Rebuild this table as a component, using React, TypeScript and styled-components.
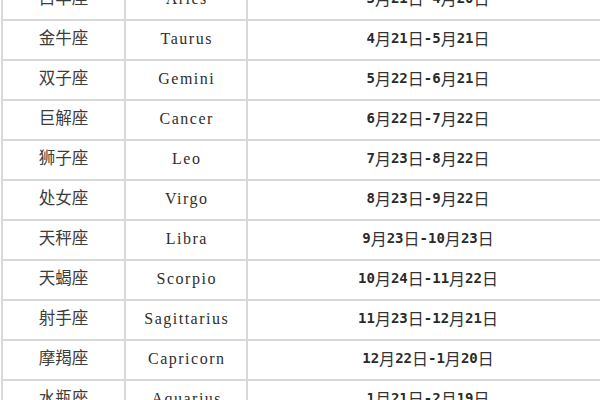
import React from "react";
import styled, { createGlobalStyle } from "styled-components";

const Global = createGlobalStyle`
  html, body {
    margin: 0;
    padding: 0;
    background: #ffffff;
    overflow: hidden;
    width: 600px;
    height: 400px;
  }
`;

const Page = styled.div`
  width: 600px;
  height: 400px;
  overflow: hidden;
  background: #ffffff;
`;

const Table = styled.div`
  display: flex;
  flex-direction: column;
  width: 607px;
  margin: -19px 0 0 1px;
  border-left: 2px solid #d8d8d8;
  box-sizing: border-box;
`;

const Row = styled.div`
  display: grid;
  grid-template-columns: 123px 122px 360px;
  height: 40px;
  box-sizing: border-box;
  border-bottom: 2px solid #d8d8d8;
`;

const Cell = styled.div<{ $last?: boolean; $kind: "zh" | "en" | "date" }>`
  display: flex;
  justify-content: center;
  align-items: flex-start;
  box-sizing: border-box;
  padding-top: ${(p) => (p.$kind === "en" ? "8px" : p.$kind === "zh" ? "6px" : "7px")};
  line-height: 20px;
  border-right: ${(p) => (p.$last ? "none" : "2px solid #d8d8d8")};
  white-space: nowrap;
  color: ${(p) => (p.$kind === "zh" ? "#3c3c3c" : "#2e2e2e")};
  font-family: ${(p) =>
    p.$kind === "en"
      ? `"Liberation Serif", "Noto Sans CJK SC", serif`
      : `"Noto Sans CJK SC", sans-serif`};
  font-size: ${(p) => (p.$kind === "en" ? "16px" : "16.5px")};
  letter-spacing: ${(p) => (p.$kind === "en" ? "1.5px" : "0")};
  text-indent: ${(p) => (p.$kind === "en" ? "1.5px" : "0")};
`;

const Num = styled.span`
  font-family: "DejaVu Sans Mono", monospace;
  font-size: 14px;
  font-weight: 600;
  letter-spacing: 0;
  color: #2a2a2a;
`;

const Han = styled.span`
  font-family: "Noto Sans CJK SC", sans-serif;
  font-size: 16px;
  color: #333333;
`;

function DateText({ text }: { text: string }) {
  const parts = text.match(/[0-9\-]+|[^0-9\-]+/g) || [];
  return (
    <>
      {parts.map((p, i) =>
        /[0-9\-]/.test(p[0]) ? <Num key={i}>{p}</Num> : <Han key={i}>{p}</Han>
      )}
    </>
  );
}

const rows: [string, string, string][] = [
  ["白羊座", "Aries", "3月21日-4月20日"],
  ["金牛座", "Taurus", "4月21日-5月21日"],
  ["双子座", "Gemini", "5月22日-6月21日"],
  ["巨解座", "Cancer", "6月22日-7月22日"],
  ["狮子座", "Leo", "7月23日-8月22日"],
  ["处女座", "Virgo", "8月23日-9月22日"],
  ["天秤座", "Libra", "9月23日-10月23日"],
  ["天蝎座", "Scorpio", "10月24日-11月22日"],
  ["射手座", "Sagittarius", "11月23日-12月21日"],
  ["摩羯座", "Capricorn", "12月22日-1月20日"],
  ["水瓶座", "Aquarius", "1月21日-2月19日"],
];

export default function App() {
  return (
    <Page>
      <Global />
      <Table>
        {rows.map(([zh, en, date]) => (
          <Row key={en}>
            <Cell $kind="zh">{zh}</Cell>
            <Cell $kind="en">{en}</Cell>
            <Cell $kind="date" $last>
              <DateText text={date} />
            </Cell>
          </Row>
        ))}
      </Table>
    </Page>
  );
}
